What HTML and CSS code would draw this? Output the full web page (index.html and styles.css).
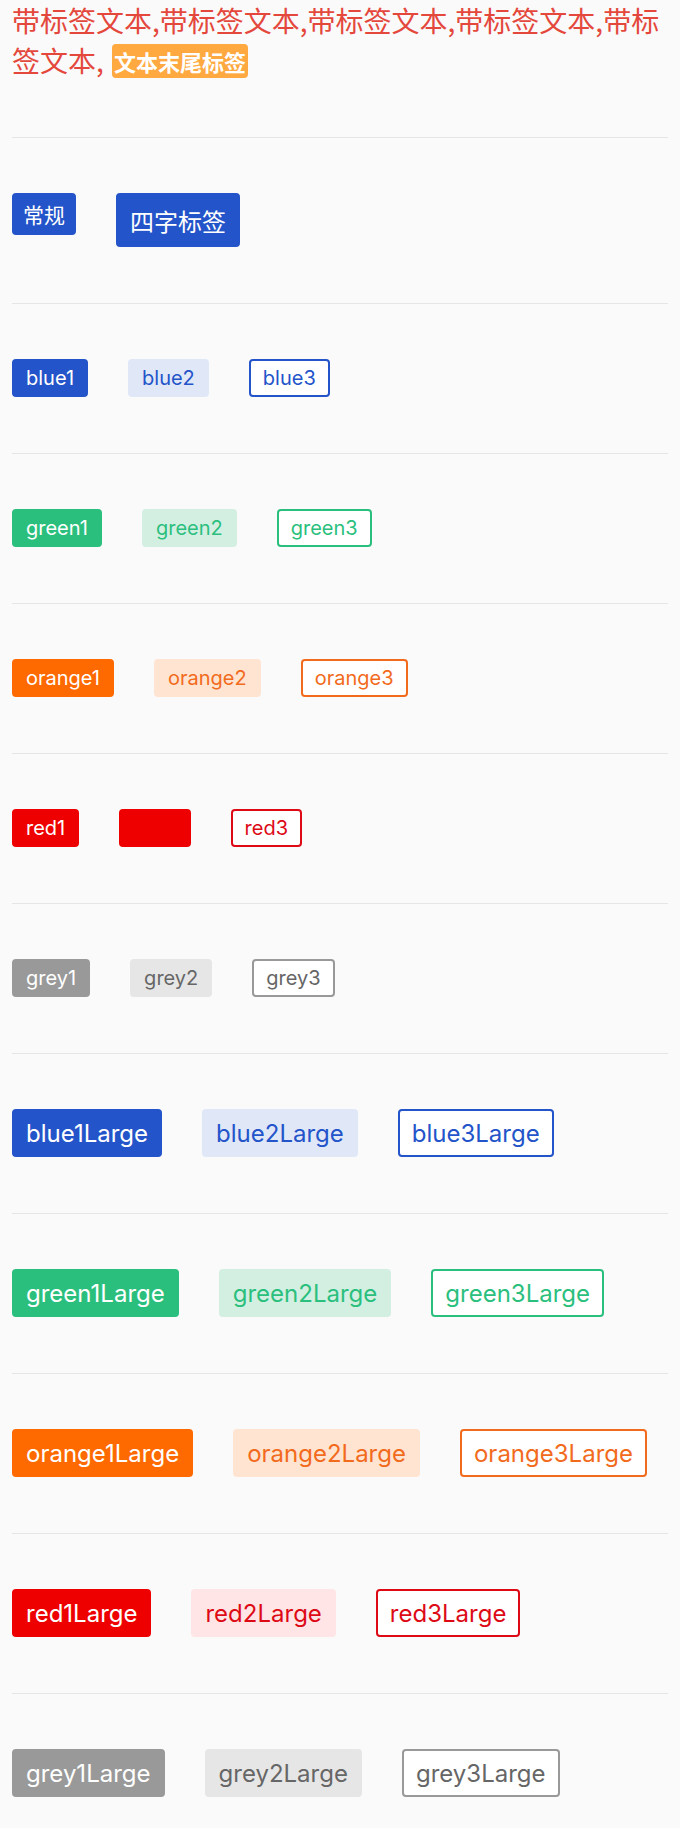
FILE: index.html
```html
<!DOCTYPE html>
<html lang="zh-CN">
<head>
<meta charset="utf-8">
<title>Tag</title>
<link rel="stylesheet" href="styles.css">
</head>
<body>
<div class="page">
  <section class="intro">
    带标签文本,带标签文本,带标签文本,带标签文本,带标签文本, <span class="end-tag">文本末尾标签</span>
  </section>

  <section class="row">
    <span class="tag cjk-sm blue1">常规</span>
    <span class="tag cjk-lg blue1">四字标签</span>
  </section>

  <section class="row">
    <span class="tag blue1">blue1</span>
    <span class="tag blue2">blue2</span>
    <span class="tag blue3">blue3</span>
  </section>

  <section class="row">
    <span class="tag green1">green1</span>
    <span class="tag green2">green2</span>
    <span class="tag green3">green3</span>
  </section>

  <section class="row">
    <span class="tag orange1">orange1</span>
    <span class="tag orange2">orange2</span>
    <span class="tag orange3">orange3</span>
  </section>

  <section class="row">
    <span class="tag red1">red1</span>
    <span class="tag red2-solid">red2</span>
    <span class="tag red3">red3</span>
  </section>

  <section class="row">
    <span class="tag grey1">grey1</span>
    <span class="tag grey2">grey2</span>
    <span class="tag grey3">grey3</span>
  </section>

  <section class="row">
    <span class="tag large blue1">blue1Large</span>
    <span class="tag large blue2">blue2Large</span>
    <span class="tag large blue3">blue3Large</span>
  </section>

  <section class="row">
    <span class="tag large green1">green1Large</span>
    <span class="tag large green2">green2Large</span>
    <span class="tag large green3">green3Large</span>
  </section>

  <section class="row">
    <span class="tag large orange1">orange1Large</span>
    <span class="tag large orange2">orange2Large</span>
    <span class="tag large orange3">orange3Large</span>
  </section>

  <section class="row">
    <span class="tag large red1">red1Large</span>
    <span class="tag large red2">red2Large</span>
    <span class="tag large red3">red3Large</span>
  </section>

  <section class="row">
    <span class="tag large grey1">grey1Large</span>
    <span class="tag large grey2">grey2Large</span>
    <span class="tag large grey3">grey3Large</span>
  </section>
</div>
</body>
</html>
```

FILE: styles.css
```css
html, body {
  margin: 0;
  padding: 0;
  background: #fafafa;
}

body {
  font-family: "Inter", "Noto Sans CJK SC", sans-serif;
}

.page {
  padding: 0 12px;
}

.intro {
  font-family: "Noto Sans CJK SC", sans-serif;
  font-size: 28px;
  line-height: 40px;
  color: #e4483c;
  padding-bottom: 57px;
}

.end-tag {
  display: inline-block;
  height: 34px;
  line-height: 34px;
  padding: 0 2px;
  margin-left: 2px;
  font-size: 22px;
  font-weight: 700;
  color: #ffffff;
  background: #ffa940;
  border-radius: 4px;
  vertical-align: 1px;
}

.row {
  display: flex;
  align-items: flex-start;
  gap: 40px;
  padding: 55px 0 56px;
  border-top: 1px solid #e6e6e6;
}

.tag {
  box-sizing: border-box;
  display: inline-flex;
  align-items: center;
  justify-content: center;
  height: 38px;
  padding: 0 12px;
  font-size: 20px;
  border: 2px solid transparent;
  border-radius: 4px;
  white-space: nowrap;
}

.tag.large {
  height: 48px;
  padding: 0 12px;
  font-size: 24px;
}

.tag.cjk-sm {
  font-family: "Noto Sans CJK SC", sans-serif;
  height: 42px;
  padding: 0 9px;
  font-size: 21px;
}

.tag.cjk-lg {
  font-family: "Noto Sans CJK SC", sans-serif;
  height: 54px;
  padding: 0 12px;
  font-size: 24px;
}

/* blue */
.blue1 { background: #2354c9; border-color: #2354c9; color: #ffffff; }
.blue2 { background: #e0e8f8; border-color: #e0e8f8; color: #2354c9; }
.blue3 { background: #ffffff; border-color: #2354c9; color: #2354c9; }

/* green */
.green1 { background: #2bbf7e; border-color: #2bbf7e; color: #ffffff; }
.green2 { background: #d3efe2; border-color: #d3efe2; color: #2bbf7e; }
.green3 { background: #ffffff; border-color: #2bbf7e; color: #2bbf7e; }

/* orange */
.orange1 { background: #ff6a00; border-color: #ff6a00; color: #ffffff; }
.orange2 { background: #ffe4d1; border-color: #ffe4d1; color: #f26b1d; }
.orange3 { background: #ffffff; border-color: #f26b1d; color: #f26b1d; }

/* red */
.red1 { background: #ee0000; border-color: #ee0000; color: #ffffff; }
.red2 { background: #ffe5e5; border-color: #ffe5e5; color: #dd0a16; }
.red2-solid { background: #ee0000; border-color: #ee0000; color: #ee0000; }
.red3 { background: #ffffff; border-color: #dd0a16; color: #dd0a16; }

/* grey */
.grey1 { background: #999999; border-color: #999999; color: #ffffff; }
.grey2 { background: #e6e6e6; border-color: #e6e6e6; color: #666666; }
.grey3 { background: #ffffff; border-color: #999999; color: #666666; }
```
